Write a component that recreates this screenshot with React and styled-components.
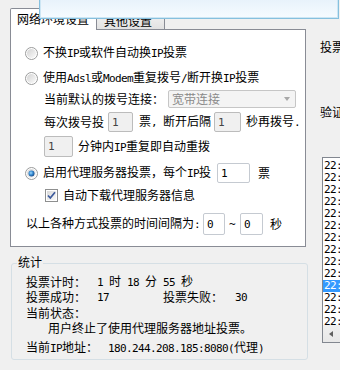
import React from 'react'
import styled, { createGlobalStyle } from 'styled-components'

const GlobalStyle = createGlobalStyle`
	html, body {
		margin: 0;
		padding: 0;
		background: #f0f0f0;
	}
	body {
		font-family: "Noto Sans CJK SC", sans-serif;
		font-size: 12px;
		color: #000;
	}
`

const logRows = [
	'22:41:07 成功', '22:41:12 成功', '22:41:18 成功', '22:41:25 失败',
	'22:41:31 成功', '22:41:36 成功', '22:41:44 成功', '22:41:50 失败',
	'22:41:57 成功', '22:42:03 成功', '22:42:10 终止', '22:42:10 成功',
	'22:42:11 成功', '22:42:12 成功', '22:42:13 成功',
]
const selectedRow = 10

// ascii runs get the narrow half-width font, like the old simsun look
const T = ({ children }) =>
	String(children)
		.split(/([\x20-\x7e]+)/)
		.map((s, i) => (i % 2 ? <Half key={i}>{s}</Half> : s))

const Radio = ({ checked }) => (
	<RadioIcon viewBox="0 0 13 13" width="13" height="13">
		<defs>
			<linearGradient id={checked ? 'rg1' : 'rg0'} x1="0" y1="0" x2="1" y2="1">
				<stop offset="0" stopColor="#d2d2d2" />
				<stop offset="1" stopColor="#fbfbfb" />
			</linearGradient>
			<radialGradient id="dot" cx="0.4" cy="0.4" r="0.6">
				<stop offset="0" stopColor="#a6dafb" />
				<stop offset="0.5" stopColor="#3d92d8" />
				<stop offset="1" stopColor="#174e8e" />
			</radialGradient>
		</defs>
		<circle cx="6.5" cy="6.5" r="6" fill="#fff" stroke="#9a9b9b" />
		<circle cx="6.5" cy="6.5" r="4.6" fill={`url(#${checked ? 'rg1' : 'rg0'})`} />
		{checked && <circle cx="6.5" cy="6.5" r="3" fill="url(#dot)" />}
	</RadioIcon>
)

const Check = () => (
	<CheckIcon viewBox="0 0 13 13" width="13" height="13">
		<defs>
			<linearGradient id="cb" x1="0" y1="0" x2="1" y2="1">
				<stop offset="0" stopColor="#d8d8d8" />
				<stop offset="1" stopColor="#fbfbfb" />
			</linearGradient>
		</defs>
		<rect x="0.5" y="0.5" width="12" height="12" fill="#fff" stroke="#8e8f8f" />
		<rect x="2" y="2" width="9" height="9" fill="url(#cb)" />
		<path d="M3 6.5 L5.3 9 L10 3.2" fill="none" stroke="#3c5a9c" strokeWidth="1.7" />
	</CheckIcon>
)

export default function App() {
	return (
		<>
			<GlobalStyle />
			<Screen>
				<LeftCol>
					<TabStrip>
						<Tab $active>网络环境设置</Tab>
						<Tab>其他设置</Tab>
					</TabStrip>
					<Panel>
						<Row $mt={13}>
							<Radio />
							<Label $ml={5}><T>不换IP或软件自动换IP投票</T></Label>
						</Row>
						<Row $mt={5}>
							<Radio />
							<Label $ml={5}><T>使用Adsl或Modem重复拨号/断开换IP投票</T></Label>
						</Row>
						<Row $mt={1} $ml={19}>
							<Label>当前默认的拨号连接：</Label>
							<Combo>
								<span>宽带连接</span>
								<Arrow />
							</Combo>
						</Row>
						<Row $mt={3} $ml={19}>
							<Label>每次拨号投</Label>
							<Field $w={25} $ml={4} $disabled><Half>1</Half></Field>
							<Label $ml={6}><T>票, 断开后隔</T></Label>
							<Field $w={27} $ml={3} $disabled><Half>1</Half></Field>
							<Label $ml={5}><T>秒再拨号.</T></Label>
						</Row>
						<Row $mt={4} $ml={19} $h={21}>
							<Field $w={29} $h={21} $disabled><Half>1</Half></Field>
							<Label $ml={5}><T>分钟内IP重复即自动重拨</T></Label>
						</Row>
						<Row $mt={6}>
							<Radio checked />
							<Label $ml={5}><T>启用代理服务器投票，每个IP投</T></Label>
							<Field $w={33} $ml={6}><Half>1</Half></Field>
							<Label $ml={8}>票</Label>
						</Row>
						<Row $mt={2} $ml={20}>
							<Check />
							<Label $ml={5}>自动下载代理服务器信息</Label>
						</Row>
						<Row $mt={8} $ml={1} $h={22}>
							<Label><T>以上各种方式投票的时间间隔为:</T></Label>
							<Field $w={22} $h={22} $ml={3}><Half>0</Half></Field>
							<Label $ml={4}><Half>~</Half></Label>
							<Field $w={23} $h={22} $ml={5}><Half>0</Half></Field>
							<Label $ml={7}>秒</Label>
						</Row>
					</Panel>
					<Group>
						<Legend>统计</Legend>
						<Row $h={15} $mt={10}>
							<Cell $w={71}>投票计时：</Cell>
							<Cell><T>1 时 18 分 55 秒</T></Cell>
						</Row>
						<Row $h={15}>
							<Cell $w={71}>投票成功：</Cell>
							<Cell $w={66}><Half>17</Half></Cell>
							<Cell $w={72}>投票失败：</Cell>
							<Cell><Half>30</Half></Cell>
						</Row>
						<Row $h={15} $mt={1}>
							<Cell>当前状态：</Cell>
						</Row>
						<Row $h={15} $ml={22}>
							<Cell>用户终止了使用代理服务器地址投票。</Cell>
						</Row>
						<Row $h={15} $mt={5}>
							<Cell $w={82}><T>当前IP地址：</T></Cell>
							<Cell><T>180.244.208.185:8080(代理)</T></Cell>
						</Row>
					</Group>
				</LeftCol>
				<RightCol>
					<SideLabel $mt={39}>投票</SideLabel>
					<SideLabel $mt={49}>验证</SideLabel>
					<ListBox>
						<ListItems>
							{logRows.map((r, i) => (
								<ListItem key={i} $sel={i === selectedRow}>{r}</ListItem>
							))}
						</ListItems>
						<HScroll>
							<ScrollArrow />
						</HScroll>
					</ListBox>
				</RightCol>
				<FloatWindow />
			</Screen>
		</>
	)
}

const Screen = styled.div`
	position: relative;
	display: flex;
	width: 340px;
	height: 370px;
	overflow: hidden;
	background: #f0f0f0;
`
const LeftCol = styled.div`
	box-sizing: border-box;
	flex: 0 0 310px;
	padding: 8px 0 0 10px;
	display: flex;
	flex-direction: column;
`
const RightCol = styled.div`
	flex: 0 0 auto;
	width: 120px;
	padding-left: 10px;
	display: flex;
	flex-direction: column;
`
const TabStrip = styled.div`
	position: relative;
	z-index: 1;
	display: flex;
	align-items: flex-end;
	height: 21px;
`
const Tab = styled.div`
	box-sizing: border-box;
	width: ${p => (p.$active ? 87 : 68)}px;
	height: ${p => (p.$active ? 22 : 17)}px;
	margin-bottom: ${p => (p.$active ? -1 : 0)}px;
	padding-left: ${p => (p.$active ? 6 : 7)}px;
	line-height: ${p => (p.$active ? 20 : 15)}px;
	border: 1px solid #898c95;
	border-bottom: none;
	border-left-width: ${p => (p.$active ? 1 : 0)}px;
	border-radius: 2px 2px 0 0;
	background: ${p => (p.$active ? '#fff' : 'linear-gradient(#f3f3f3, #e2e2e2)')};
	white-space: nowrap;
`
const Panel = styled.div`
	box-sizing: border-box;
	width: 296px;
	height: 218px;
	padding-left: 14px;
	border: 1px solid #898c95;
	background: #fff;
`
const Row = styled.div`
	display: flex;
	align-items: center;
	height: ${p => p.$h || 20}px;
	margin-top: ${p => p.$mt || 0}px;
	padding-left: ${p => p.$ml || 0}px;
	white-space: nowrap;
`
const Label = styled.span`
	margin-left: ${p => p.$ml || 0}px;
	line-height: 16px;
`
const Half = styled.span`
	font-family: "DejaVu Sans Mono", monospace;
	font-size: 11px;
	letter-spacing: -0.62px;
	white-space: pre;
`
const RadioIcon = styled.svg`
	display: block;
	flex: 0 0 13px;
`
const CheckIcon = styled.svg`
	display: block;
	flex: 0 0 13px;
`
const Field = styled.div`
	box-sizing: border-box;
	display: flex;
	align-items: center;
	width: ${p => p.$w}px;
	height: ${p => p.$h || 20}px;
	margin-left: ${p => p.$ml || 0}px;
	padding-left: 3px;
	border: 1px solid ${p => (p.$disabled ? '#bcbcbc' : '#c5cad1')};
	border-radius: 2px;
	background: ${p => (p.$disabled ? '#f0f0f0' : '#fff')};
	color: ${p => (p.$disabled ? '#444' : '#000')};
`
const Combo = styled.div`
	box-sizing: border-box;
	display: flex;
	align-items: center;
	justify-content: space-between;
	width: 128px;
	height: 18px;
	margin-left: 4px;
	padding: 0 5px 0 3px;
	border: 1px solid #c6c6c6;
	border-radius: 2px;
	background: #f4f4f4;
	color: #8a8a8a;
	line-height: 16px;
`
const Arrow = styled.span`
	width: 0;
	height: 0;
	border-left: 3.5px solid transparent;
	border-right: 3.5px solid transparent;
	border-top: 4px solid #a8a8a8;
`
const Group = styled.div`
	position: relative;
	box-sizing: border-box;
	width: 297px;
	height: 97px;
	margin: 16px 0 0 1px;
	padding-left: 14px;
	border: 1px solid #d5dfe5;
	border-radius: 3px;
`
const Legend = styled.span`
	position: absolute;
	top: -10px;
	left: 5px;
	padding: 0 1px;
	line-height: 16px;
	background: #f0f0f0;
`
const Cell = styled.span`
	display: inline-block;
	width: ${p => (p.$w ? `${p.$w}px` : 'auto')};
	line-height: 15px;
`
const SideLabel = styled.div`
	margin-top: ${p => p.$mt}px;
	line-height: 16px;
	white-space: nowrap;
`
const ListBox = styled.div`
	box-sizing: border-box;
	display: flex;
	flex-direction: column;
	width: 100px;
	height: 186px;
	margin: 37px 0 0 2px;
	border: 1px solid #828790;
	background: #fff;
`
const ListItems = styled.div`
	flex: 1;
	overflow: hidden;
	padding-top: 2px;
`
const ListItem = styled.div`
	height: 12px;
	padding-left: 1px;
	font-family: "DejaVu Sans Mono", monospace;
	font-size: 11px;
	letter-spacing: -0.62px;
	line-height: 12px;
	white-space: pre;
	background: ${p => (p.$sel ? '#3399ff' : 'transparent')};
	color: ${p => (p.$sel ? '#fff' : '#000')};
`
const HScroll = styled.div`
	display: flex;
	align-items: center;
	height: 17px;
	background: linear-gradient(#f0f0f0, #e8e8e8);
`
const ScrollArrow = styled.span`
	margin-left: 6px;
	width: 0;
	height: 0;
	border-top: 3.5px solid transparent;
	border-bottom: 3.5px solid transparent;
	border-right: 4px solid #606060;
`
const FloatWindow = styled.div`
	position: absolute;
	z-index: 5;
	top: 0;
	left: 39px;
	box-sizing: border-box;
	width: 300px;
	height: 19px;
	border: 1px solid #86c0de;
	border-top: none;
	box-shadow: inset 0 -1px 0 #cde6f4, inset 1px 0 0 #cde6f4, inset -1px 0 0 #cde6f4;
	background: linear-gradient(#e8f2fb, #f6fbff);
`
